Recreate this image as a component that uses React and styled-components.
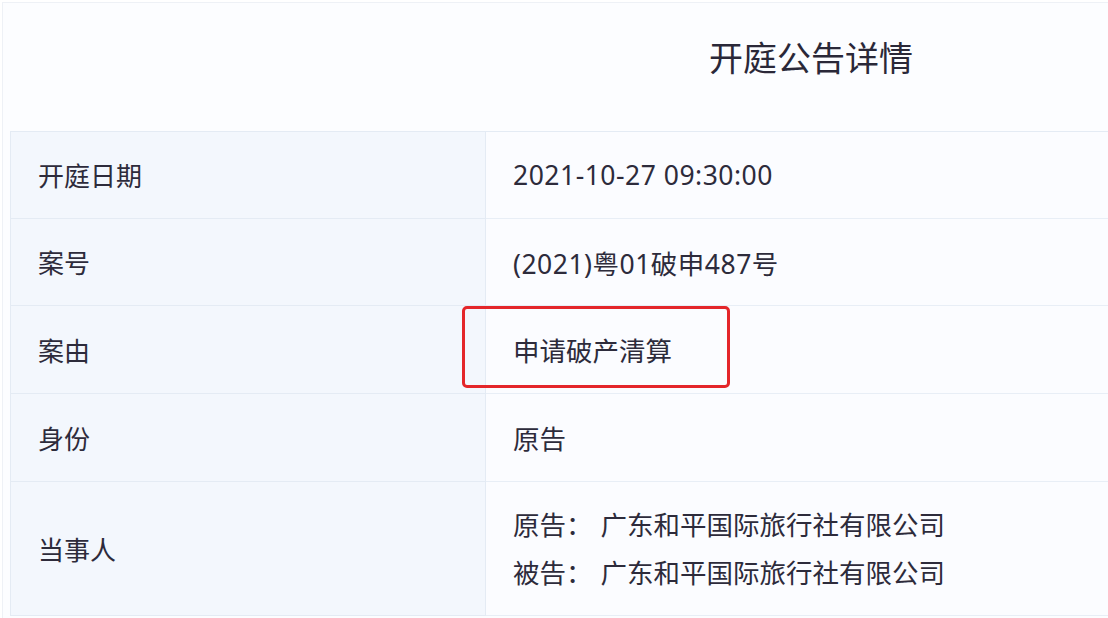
import React from "react";
import styled, { createGlobalStyle } from "styled-components";

const GlobalStyle = createGlobalStyle`
  html, body {
    margin: 0;
    padding: 0;
    background: #ffffff;
  }
  body {
    font-family: "Noto Sans", "Noto Sans CJK SC", sans-serif;
    color: #2d2b3b;
  }
`;

const Page = styled.div`
  width: 1108px;
  height: 618px;
  padding: 2px 0 0 2px;
  box-sizing: border-box;
  overflow: hidden;
`;

const Panel = styled.div`
  height: 100%;
  box-sizing: border-box;
  border-top: 1px solid #eef1f6;
  border-left: 1px solid #eef1f6;
  background: #fcfdff;
  padding-left: 7px;
`;

const Header = styled.div`
  height: 128px;
  box-sizing: border-box;
  padding: 34px 0 0 699px;
`;

const Title = styled.h1`
  margin: 0;
  font-size: 34px;
  font-weight: 400;
  line-height: 42px;
  color: #2a2838;
`;

const Table = styled.div`
  width: 1097px;
  display: grid;
  grid-template-columns: 475px 1fr;
  border-top: 1px solid #e4ebf4;
  border-left: 1px solid #e4ebf4;
  border-right: 1px solid #e4ebf4;
`;

const Label = styled.div`
  height: ${(p) => p.$h}px;
  box-sizing: border-box;
  display: flex;
  align-items: center;
  padding-left: 27px;
  background: #f3f7fd;
  border-right: 1px solid #e4ebf4;
  border-bottom: 1px solid #e4ebf4;
  font-size: 26px;
`;

const Value = styled.div`
  position: relative;
  height: ${(p) => p.$h}px;
  box-sizing: border-box;
  display: flex;
  flex-direction: column;
  justify-content: center;
  padding-left: 27px;
  background: #fbfcff;
  border-bottom: 1px solid #e8eef6;
  font-size: 26.5px;
  letter-spacing: ${(p) => (p.$spaced ? "0.5px" : "0")};
`;

const Party = styled.div`
  line-height: 48px;
`;

const Colon = styled.span`
  margin-right: 8px;
`;

const Highlight = styled.div`
  position: absolute;
  left: -24px;
  top: 0;
  width: 268px;
  height: 82px;
  box-sizing: border-box;
  border: 3px solid #e4262a;
  border-radius: 5px;
  pointer-events: none;
`;

const rows = [
  { label: "开庭日期", value: "2021-10-27 09:30:00", h: 87, spaced: true },
  { label: "案号", value: "(2021)粤01破申487号", h: 87, spaced: true },
  { label: "案由", value: "申请破产清算", h: 88, mark: true },
  { label: "身份", value: "原告", h: 88 },
];

const parties = [
  { role: "原告", name: "广东和平国际旅行社有限公司" },
  { role: "被告", name: "广东和平国际旅行社有限公司" },
];

export default function App() {
  return (
    <>
      <GlobalStyle />
      <Page>
        <Panel>
          <Header>
            <Title>开庭公告详情</Title>
          </Header>
          <Table>
            {rows.map((r) => (
              <React.Fragment key={r.label}>
                <Label $h={r.h}>{r.label}</Label>
                <Value $h={r.h} $spaced={r.spaced}>
                  {r.value}
                  {r.mark && <Highlight />}
                </Value>
              </React.Fragment>
            ))}
            <Label $h={134}>当事人</Label>
            <Value $h={134}>
              {parties.map((p) => (
                <Party key={p.role}>
                  {p.role}
                  <Colon>：</Colon>
                  {p.name}
                </Party>
              ))}
            </Value>
          </Table>
        </Panel>
      </Page>
    </>
  );
}
